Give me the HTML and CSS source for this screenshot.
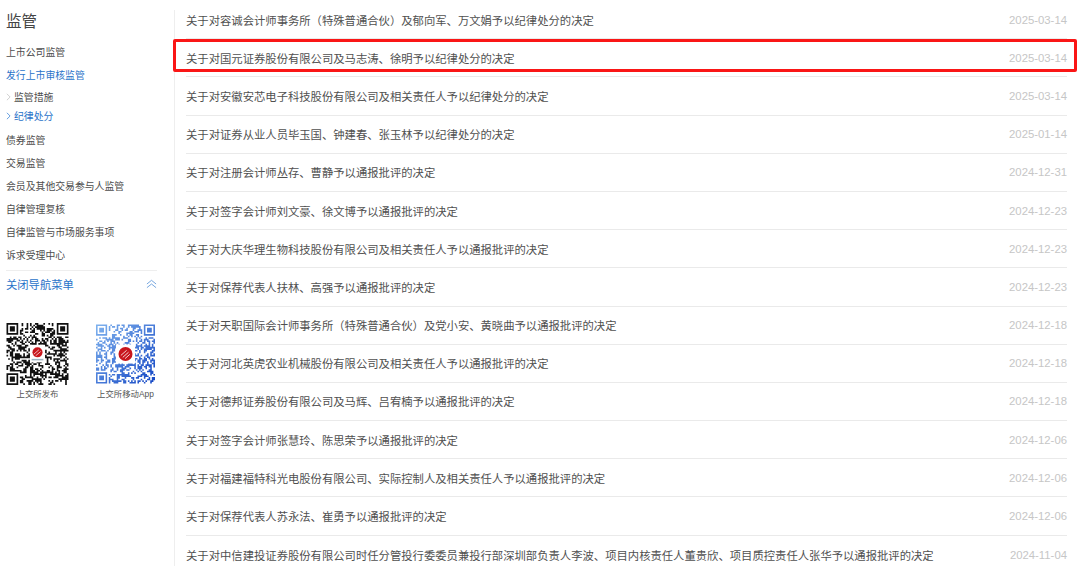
FILE: index.html
```html
<!DOCTYPE html>
<html lang="zh-CN">
<head>
<meta charset="utf-8">
<title>监管</title>
<link rel="stylesheet" href="styles.css">
</head>
<body>
<div class="page">
  <aside class="sidebar">
    <h1 class="title">监管</h1>
    <nav class="nav">
      <a class="nav-item">上市公司监管</a>
      <a class="nav-item is-active">发行上市审核监管</a>
      <a class="sub-item"><svg class="chev" viewBox="0 0 6 10"><path d="M1 1l4 4-4 4"/></svg>监管措施</a>
      <a class="sub-item is-active"><svg class="chev" viewBox="0 0 6 10"><path d="M1 1l4 4-4 4"/></svg>纪律处分</a>
      <a class="nav-item">债券监管</a>
      <a class="nav-item">交易监管</a>
      <a class="nav-item">会员及其他交易参与人监管</a>
      <a class="nav-item">自律管理复核</a>
      <a class="nav-item">自律监管与市场服务事项</a>
      <a class="nav-item">诉求受理中心</a>
    </nav>
    <div class="close-nav">
      <span>关闭导航菜单</span>
      <svg class="up" viewBox="0 0 12 10"><path d="M1 5l5-4 5 4M1 9l5-4 5 4"/></svg>
    </div>
    <div class="qr-row">
      <figure class="qr-card">
        <svg class="qr qr-black" data-seed="17" viewBox="0 0 37 37">
          <g class="qr-modules"></g>
          <rect x="14" y="13" width="9" height="10.5" fill="#fff"/>
          <circle cx="18.5" cy="17.5" r="3" fill="#c8161d"/>
          <path d="M16.3 18.6l3-2.6M17.4 19.6l3-2.6" stroke="#fff" stroke-width=".4"/>
          <rect x="15" y="21.4" width="7" height=".9" fill="#9db4c4"/>
        </svg>
        <figcaption>上交所发布</figcaption>
      </figure>
      <figure class="qr-card">
        <svg class="qr qr-blue" data-seed="91" viewBox="0 0 37 37">
          <defs>
            <linearGradient id="qrGrad" x1="0" y1="0" x2="1" y2="1">
              <stop offset="0" stop-color="#7fb2ee"/>
              <stop offset="1" stop-color="#1346c4"/>
            </linearGradient>
          </defs>
          <g class="qr-modules"></g>
          <rect x="12.5" y="12.5" width="12" height="12" fill="#fff"/>
          <circle cx="18.5" cy="18.5" r="4.4" fill="#c8161d"/>
          <path d="M15.6 19.4l3.6-3.2M16.8 20.6l3.6-3.2M18.2 21.4l3-2.7" stroke="#fff" stroke-width=".5"/>
        </svg>
        <figcaption>上交所移动App</figcaption>
      </figure>
    </div>
  </aside>
  <main class="list-wrap">
    <ul class="list">
      <li class="row"><a>关于对容诚会计师事务所（特殊普通合伙）及郁向军、万文娟予以纪律处分的决定</a><time>2025-03-14</time></li>
      <li class="row"><a>关于对国元证券股份有限公司及马志涛、徐明予以纪律处分的决定</a><time>2025-03-14</time></li>
      <li class="row"><a>关于对安徽安芯电子科技股份有限公司及相关责任人予以纪律处分的决定</a><time>2025-03-14</time></li>
      <li class="row"><a>关于对证券从业人员毕玉国、钟建春、张玉林予以纪律处分的决定</a><time>2025-01-14</time></li>
      <li class="row"><a>关于对注册会计师丛存、曹静予以通报批评的决定</a><time>2024-12-31</time></li>
      <li class="row"><a>关于对签字会计师刘文豪、徐文博予以通报批评的决定</a><time>2024-12-23</time></li>
      <li class="row"><a>关于对大庆华理生物科技股份有限公司及相关责任人予以通报批评的决定</a><time>2024-12-23</time></li>
      <li class="row"><a>关于对保荐代表人扶林、高强予以通报批评的决定</a><time>2024-12-23</time></li>
      <li class="row"><a>关于对天职国际会计师事务所（特殊普通合伙）及党小安、黄晓曲予以通报批评的决定</a><time>2024-12-18</time></li>
      <li class="row"><a>关于对河北英虎农业机械股份有限公司及相关责任人予以通报批评的决定</a><time>2024-12-18</time></li>
      <li class="row"><a>关于对德邦证券股份有限公司及马辉、吕宥楠予以通报批评的决定</a><time>2024-12-18</time></li>
      <li class="row"><a>关于对签字会计师张慧玲、陈思荣予以通报批评的决定</a><time>2024-12-06</time></li>
      <li class="row"><a>关于对福建福特科光电股份有限公司、实际控制人及相关责任人予以通报批评的决定</a><time>2024-12-06</time></li>
      <li class="row"><a>关于对保荐代表人苏永法、崔勇予以通报批评的决定</a><time>2024-12-06</time></li>
      <li class="row"><a>关于对中信建投证券股份有限公司时任分管投行委委员兼投行部深圳部负责人李波、项目内核责任人董贵欣、项目质控责任人张华予以通报批评的决定</a><time>2024-11-04</time></li>
    </ul>
    <div class="highlight"></div>
  </main>
</div>
<script src="qr.js"></script>
</body>
</html>
```
FILE: styles.css
```css
* { box-sizing: border-box; }
html, body { margin: 0; height: 566px; overflow: hidden; background: #fff; }
body { font-family: "Liberation Sans", "Noto Sans CJK SC", sans-serif; color: #4d4d4d; }
.page { display: flex; height: 566px; }
.sidebar { width: 174px; flex: none; padding: 13px 17px 0 6px; }
.title { margin: 0 0 10px; font-size: 15.5px; line-height: 18px; font-weight: 400; color: #444; }
.nav { display: flex; flex-direction: column; }
.nav-item { display: block; height: 23px; line-height: 23px; font-size: 9.85px; color: #4d4d4d; white-space: nowrap; }
.sub-item { display: flex; align-items: center; height: 19.5px; font-size: 9.85px; color: #4d4d4d; }
.sub-item.is-active { margin-bottom: 2.5px; }
.is-active, .nav-item.is-active, .sub-item.is-active { color: #2a73c9; }
.chev { width: 5px; height: 8px; margin-right: 3px; fill: none; stroke: #c4c4c4; stroke-width: 1; }
.sub-item.is-active .chev { stroke: #3f86d8; }
.close-nav { display: flex; align-items: center; justify-content: space-between; margin-top: 3.5px; height: 27px; border-top: 1px solid #eee; font-size: 11.3px; color: #2a73c9; }
.up { width: 11px; height: 10px; fill: none; stroke: #6a9fdc; stroke-width: 1; }
.qr-row { display: flex; margin-top: 25.5px; width: 160px; }
.qr-card { margin: 0; display: flex; flex-direction: column; align-items: center; }
.qr-card:first-child { width: 63px; margin-right: 27px; }
.qr-card:last-child { width: 59px; }
.qr { display: block; }
.qr-black { width: 63px; height: 62px; }
.qr-blue { width: 59px; height: 62px; }
.qr-black .qr-modules { fill: #111; }
.qr-blue .qr-modules { fill: url(#qrGrad); }
figcaption { margin-top: 3px; font-size: 8.4px; line-height: 12px; color: #555; white-space: nowrap; }
.list-wrap { position: relative; width: 893px; flex: none; height: 556px; margin-top: 10px; padding: 0 0 0 11px; border-left: 1px solid #eee; }
.list { list-style: none; margin: -9px 0 0; padding: 0; }
.row { display: flex; justify-content: space-between; align-items: center; height: 38.2px; border-bottom: 1px solid #eaeaea; font-size: 11.34px; white-space: nowrap; }
.row a { color: #505050; }
.row time { color: #c6c6c6; font-size: 11.34px; }
.row:last-child { border-bottom: 0; }
.highlight { position: absolute; left: -2px; top: 29px; width: 904px; height: 33px; border: 3px solid #fa1616; border-radius: 2px; pointer-events: none; }
```
FILE: qr.js
```js
// Draws the decorative QR-code modules into each .qr svg from a fixed seed.
document.querySelectorAll('.qr').forEach(function (svg) {
  var seed = Number(svg.dataset.seed);
  function rnd() {
    seed = (seed * 1664525 + 1013904223) % 4294967296;
    return seed / 4294967296;
  }
  var n = 37, d = '';
  function inFinder(x, y) {
    return (x < 8 && y < 8) || (x >= n - 8 && y < 8) || (x < 8 && y >= n - 8);
  }
  for (var y = 0; y < n; y++) {
    for (var x = 0; x < n; x++) {
      if (!inFinder(x, y) && rnd() > 0.5) d += 'M' + x + ' ' + y + 'h1v1h-1z';
    }
  }
  [[0, 0], [n - 7, 0], [0, n - 7]].forEach(function (p) {
    d += 'M' + p[0] + ' ' + p[1] + 'h7v7h-7zM' + (p[0] + 1) + ' ' + (p[1] + 1) + 'v5h5v-5z';
    d += 'M' + (p[0] + 2) + ' ' + (p[1] + 2) + 'h3v3h-3z';
  });
  var path = document.createElementNS('http://www.w3.org/2000/svg', 'path');
  path.setAttribute('d', d);
  path.setAttribute('fill-rule', 'evenodd');
  svg.querySelector('.qr-modules').appendChild(path);
});
```
